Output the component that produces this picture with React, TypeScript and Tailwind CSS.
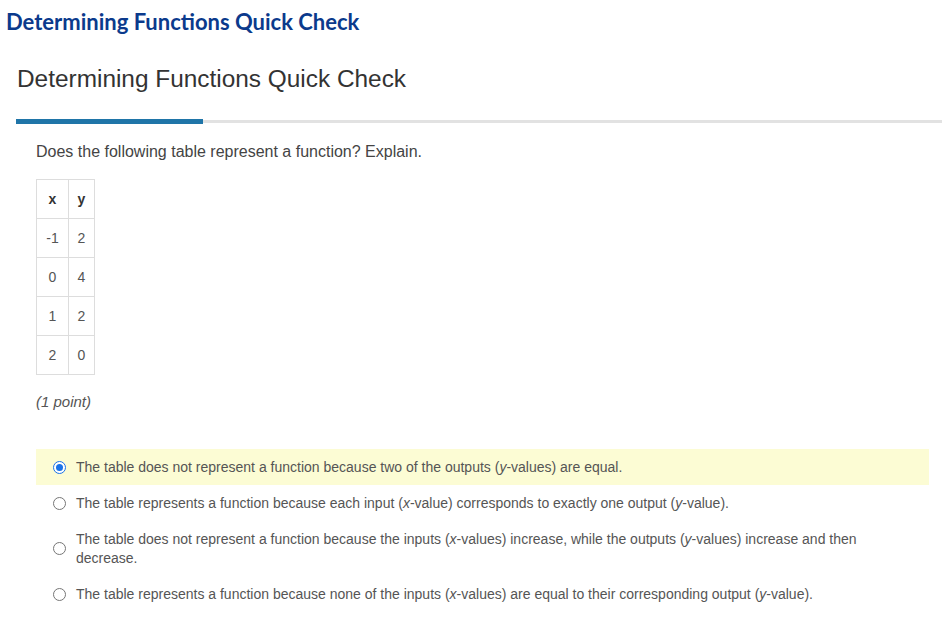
const rows: [string, string][] = [
  ["-1", "2"],
  ["0", "4"],
  ["1", "2"],
  ["2", "0"],
];

function Radio({ checked }: { checked?: boolean }) {
  return (
    <span
      className={
        "flex h-[13px] w-[13px] shrink-0 items-center justify-center rounded-full border bg-white " +
        (checked ? "border-[#1a73e8]" : "border-[#767676]")
      }
    >
      {checked && <span className="h-[7px] w-[7px] rounded-full bg-[#1a73e8]" />}
    </span>
  );
}

function Option({ checked, children }: { checked?: boolean; children: React.ReactNode }) {
  return (
    <div
      className={
        "flex items-center gap-[10px] pl-[17px] pr-[60px] py-[8.5px] text-[14px] leading-[19px] text-[#555] " +
        (checked ? "bg-[#fcfcd4]" : "")
      }
    >
      <Radio checked={checked} />
      <p>{children}</p>
    </div>
  );
}

export default function App() {
  return (
    <div className="min-h-[623px] w-[942px] bg-white font-['Liberation_Sans',Arial,sans-serif]">
      <h1 className="pl-[6px] pt-[8px] font-['Lato',sans-serif] text-[22px] font-bold leading-[28px] text-[#0b3a8c]">
        Determining Functions Quick Check
      </h1>
      <h2 className="mt-[28px] pl-[17px] text-[24.4px] leading-[30px] text-[#333]">
        Determining Functions Quick Check
      </h2>
      <div className="ml-[16px] mt-[25px] flex h-[5px]">
        <div className="w-[187px] bg-[#1f75a8]" />
        <div className="mt-[1px] h-[3px] flex-1 bg-[#e2e2e2]" />
      </div>

      <div className="pl-[36px] pr-[13px]">
        <p className="mt-[17px] text-[16px] leading-[22px] text-[#444]">
          Does the following table represent a function? Explain.
        </p>

        <table className="mt-[16px] border-collapse text-[14px] text-[#555]">
          <thead>
            <tr>
              <th className="h-[39px] w-[32px] border border-[#ddd] text-center font-bold text-[#333]">x</th>
              <th className="h-[39px] w-[26px] border border-[#ddd] text-center font-bold text-[#333]">y</th>
            </tr>
          </thead>
          <tbody>
            {rows.map(([x, y]) => (
              <tr key={x}>
                <td className="h-[39px] border border-[#ddd] text-center">{x}</td>
                <td className="h-[39px] border border-[#ddd] text-center">{y}</td>
              </tr>
            ))}
          </tbody>
        </table>

        <p className="mt-[16px] text-[15px] italic text-[#555]">(1 point)</p>

        <div className="mt-[35.5px] flex flex-col">
          <Option checked>
            The table does not represent a function because two of the outputs (<i>y</i>-values) are equal.
          </Option>
          <Option>
            The table represents a function because each input (<i>x</i>-value) corresponds to exactly one output (<i>y</i>-value).
          </Option>
          <Option>
            The table does not represent a function because the inputs (<i>x</i>-values) increase, while the outputs (<i>y</i>-values) increase and then decrease.
          </Option>
          <Option>
            The table represents a function because none of the inputs (<i>x</i>-values) are equal to their corresponding output (<i>y</i>-value).
          </Option>
        </div>
      </div>
    </div>
  );
}
